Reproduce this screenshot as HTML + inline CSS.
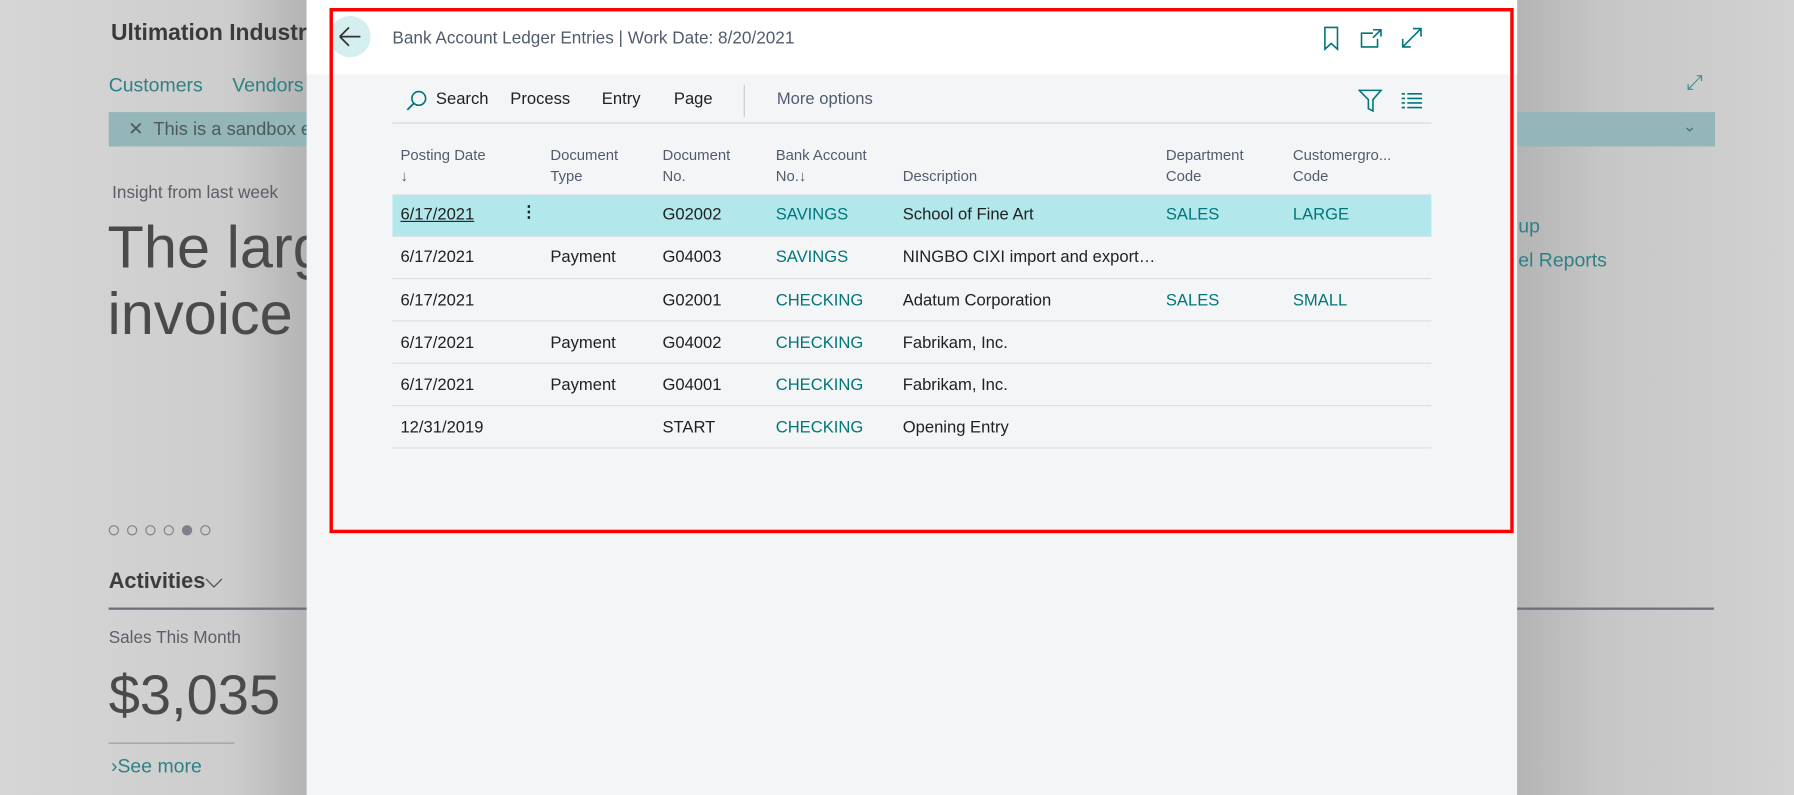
<!DOCTYPE html>
<html><head><style>
*{margin:0;padding:0;box-sizing:border-box}
html,body{width:1794px;height:795px;overflow:hidden}
body{background:#d2d2d2}
#w{position:absolute;left:0;top:0;width:1568px;height:695px;transform:scale(1.14413);transform-origin:0 0;font-family:"Liberation Sans",sans-serif;background:linear-gradient(90deg,#d6d6d6 0px,#cdcdcd 200px,#b4b4b4 268px,#b4b4b4 1326px,#c6c6c6 1400px,#d2d2d2 1568px)}
.a{position:absolute;white-space:nowrap}
.modal{position:absolute;left:268px;top:0;width:1058px;height:695px;background:#f4f5f7}
.mh{position:absolute;left:0;top:0;width:1058px;height:65px;background:#fff}
.red{position:absolute;left:288px;top:7px;width:1035px;height:459px;border:3px solid #f00}
.t{color:#212121;font-size:14.5px}
.tl{color:#00767a;font-size:14.5px}
.h{color:#505c6d;font-size:13px;line-height:18px}
.row{position:absolute;left:343px;width:908px;height:37px;border-bottom:1px solid #dcdfe3}
.dot{position:absolute;top:459px;width:9px;height:9px;border:1px solid #7d8088;border-radius:50%}
</style></head><body><div id="w">
<div class="a" style="left:97px;top:18px;font-size:20px;font-weight:bold;color:#3a3a3a">Ultimation Industries</div>
<div class="a" style="left:95px;top:65px;font-size:17px;color:#2e8085">Customers</div>
<div class="a" style="left:203px;top:65px;font-size:17px;color:#2e8085">Vendors</div>
<div class="a" style="left:95px;top:98px;width:1404px;height:30px;background:#94b6b8"></div>
<div class="a" style="left:112px;top:103px;font-size:16px;color:#4e5a5a">✕&nbsp; This is a sandbox environment</div>
<div class="a" style="left:1471px;top:102px;font-size:14px;color:#3d7477">⌄</div>
<div class="a" style="left:1474px;top:62px;font-size:18px;color:#3a8a8e">⤢</div>
<div class="a" style="left:98px;top:160px;font-size:15px;color:#5a5e66">Insight from last week</div>
<div class="a" style="left:94px;top:188px;font-size:52px;color:#4a4a4a;line-height:58px">The largest<br>invoice</div>
<div class="dot" style="left:95px"></div><div class="dot" style="left:111px"></div><div class="dot" style="left:127px"></div><div class="dot" style="left:143px"></div><div class="dot" style="left:159px;background:#7d8088"></div><div class="dot" style="left:175px"></div>
<div class="a" style="left:95px;top:498px;font-size:19px;font-weight:bold;color:#3c3c3c">Activities</div>
<svg class="a" style="left:179px;top:505px" width="16" height="10"><path d="M1 1L8 8L15 1" stroke="#555" stroke-width="1.2" fill="none"/></svg>
<div class="a" style="left:95px;top:531px;width:1403px;height:2px;background:#6d7078"></div>
<div class="a" style="left:95px;top:549px;font-size:15px;color:#5a5e66">Sales This Month</div>
<div class="a" style="left:95px;top:580px;font-size:49px;color:#4a4a4a">$3,035</div>
<div class="a" style="left:95px;top:649px;width:110px;height:1px;background:#999"></div>
<div class="a" style="left:97px;top:660px;font-size:17px;color:#2e8085">›See more</div>
<div class="a" style="left:1327px;top:188px;font-size:17px;color:#2e8085">up</div>
<div class="a" style="left:1327px;top:218px;font-size:17px;color:#2e8085">el Reports</div>

<div class="modal"><div class="mh"></div></div>
<div class="a" style="left:288px;top:14px;width:36px;height:36px;border-radius:50%;background:#d5eef0"></div>
<svg class="a" style="left:295px;top:22px" width="22" height="20" viewBox="0 0 22 20"><path d="M2 10H20M2 10L10 2M2 10L10 18" stroke="#333" stroke-width="1.5" fill="none"/></svg>
<div class="a" style="left:343px;top:25px;font-size:15px;color:#505c6d">Bank Account Ledger Entries | Work Date: 8/20/2021</div>
<svg class="a" style="left:1155px;top:23px" width="18" height="22"><path d="M3 1H14V20L8.5 15L3 20Z" stroke="#00767a" stroke-width="1.4" fill="none"/></svg>
<svg class="a" style="left:1188px;top:24px" width="22" height="20"><path d="M12 5H2V17H16V10M12 2H19V8M19 2L12 9" stroke="#00767a" stroke-width="1.4" fill="none"/></svg>
<svg class="a" style="left:1224px;top:23px" width="20" height="20"><path d="M2 18L18 2M11 2H18V9M2 11V18H9" stroke="#00767a" stroke-width="1.4" fill="none"/></svg>

<svg class="a" style="left:354px;top:78px" width="20" height="20"><circle cx="12" cy="8" r="6" stroke="#00767a" stroke-width="1.4" fill="none"/><path d="M8 12L2 18" stroke="#00767a" stroke-width="1.6"/></svg>
<div class="a t" style="left:381px;top:79px">Search</div>
<div class="a t" style="left:446px;top:79px">Process</div>
<div class="a t" style="left:526px;top:79px">Entry</div>
<div class="a t" style="left:589px;top:79px">Page</div>
<div class="a" style="left:650px;top:74px;width:1px;height:28px;background:#c8c8c8"></div>
<div class="a" style="left:679px;top:79px;font-size:14.5px;color:#505c6d">More options</div>
<svg class="a" style="left:1187px;top:78px" width="22" height="20"><path d="M1 1H20L13 9V19L9 17V9Z" stroke="#00767a" stroke-width="1.4" fill="none"/></svg>
<svg class="a" style="left:1225px;top:80px" width="18" height="15"><path d="M0 2H3M5 2H18M0 6H3M5 6H18M0 10H3M5 10H18M0 14H3M5 14H18" stroke="#00767a" stroke-width="1.4"/></svg>
<div class="a" style="left:343px;top:107px;width:908px;height:1px;background:#d5d8dc"></div>

<div class="a h" style="left:350px;top:127px">Posting Date<br>↓</div>
<div class="a h" style="left:481px;top:127px">Document<br>Type</div>
<div class="a h" style="left:579px;top:127px">Document<br>No.</div>
<div class="a h" style="left:678px;top:127px">Bank Account<br>No.↓</div>
<div class="a h" style="left:789px;top:145px">Description</div>
<div class="a h" style="left:1019px;top:127px">Department<br>Code</div>
<div class="a h" style="left:1130px;top:127px">Customergro...<br>Code</div>

<div class="row" style="top:170px;background:#b2e8eb;border-top:1px solid #d5d8dc"></div>
<div class="row" style="top:207px"></div>
<div class="row" style="top:244px"></div>
<div class="row" style="top:281px"></div>
<div class="row" style="top:318px"></div>
<div class="row" style="top:355px"></div>

<div class="a t" style="left:350px;top:180px;text-decoration:underline">6/17/2021</div>
<div class="a t" style="left:455px;top:178px;font-weight:bold">⋮</div>
<div class="a t" style="left:579px;top:180px">G02002</div>
<div class="a tl" style="left:678px;top:180px">SAVINGS</div>
<div class="a t" style="left:789px;top:180px">School of Fine Art</div>
<div class="a tl" style="left:1019px;top:180px">SALES</div>
<div class="a tl" style="left:1130px;top:180px">LARGE</div>

<div class="a t" style="left:350px;top:217px">6/17/2021</div>
<div class="a t" style="left:481px;top:217px">Payment</div>
<div class="a t" style="left:579px;top:217px">G04003</div>
<div class="a tl" style="left:678px;top:217px">SAVINGS</div>
<div class="a t" style="left:789px;top:217px;width:222px;overflow:hidden;text-overflow:ellipsis">NINGBO CIXI import and export Co.</div>

<div class="a t" style="left:350px;top:255px">6/17/2021</div>
<div class="a t" style="left:579px;top:255px">G02001</div>
<div class="a tl" style="left:678px;top:255px">CHECKING</div>
<div class="a t" style="left:789px;top:255px">Adatum Corporation</div>
<div class="a tl" style="left:1019px;top:255px">SALES</div>
<div class="a tl" style="left:1130px;top:255px">SMALL</div>

<div class="a t" style="left:350px;top:292px">6/17/2021</div>
<div class="a t" style="left:481px;top:292px">Payment</div>
<div class="a t" style="left:579px;top:292px">G04002</div>
<div class="a tl" style="left:678px;top:292px">CHECKING</div>
<div class="a t" style="left:789px;top:292px">Fabrikam, Inc.</div>

<div class="a t" style="left:350px;top:329px">6/17/2021</div>
<div class="a t" style="left:481px;top:329px">Payment</div>
<div class="a t" style="left:579px;top:329px">G04001</div>
<div class="a tl" style="left:678px;top:329px">CHECKING</div>
<div class="a t" style="left:789px;top:329px">Fabrikam, Inc.</div>

<div class="a t" style="left:350px;top:366px">12/31/2019</div>
<div class="a t" style="left:579px;top:366px">START</div>
<div class="a tl" style="left:678px;top:366px">CHECKING</div>
<div class="a t" style="left:789px;top:366px">Opening Entry</div>

<div class="red"></div>
</div></body></html>
